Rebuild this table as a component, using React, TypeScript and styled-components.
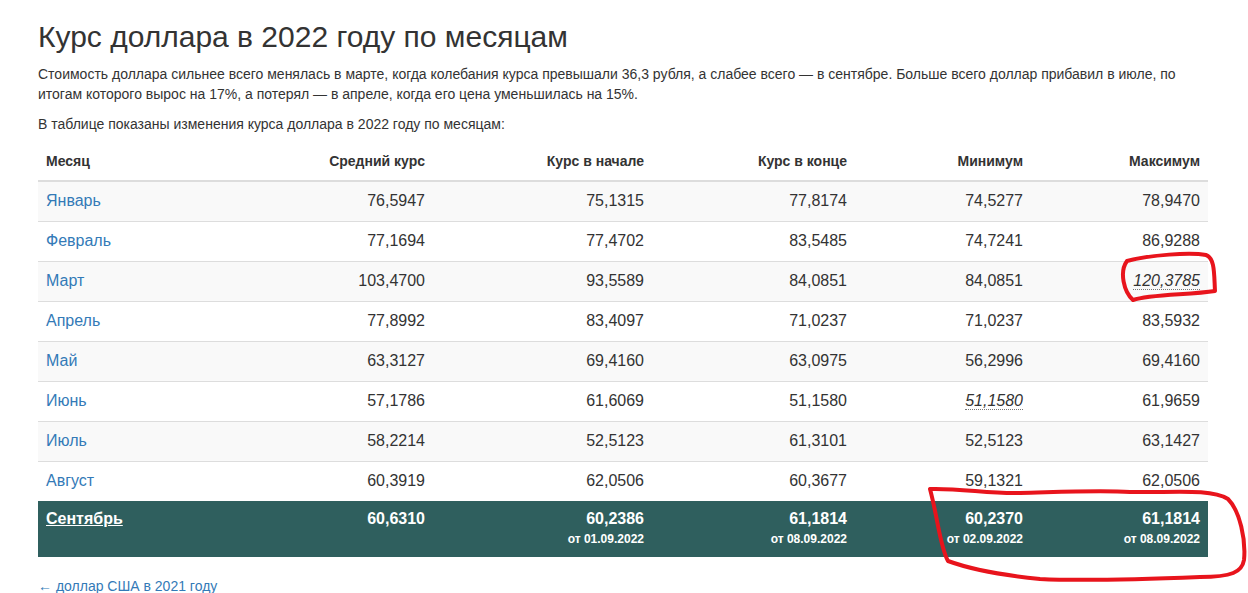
import React from "react";
import styled, { createGlobalStyle } from "styled-components";

const Global = createGlobalStyle`
  html, body { margin: 0; padding: 0; background: #fff; }
  body {
    font-family: "Liberation Sans", Arial, sans-serif;
    font-size: 14px;
    line-height: 1.42857;
    color: #333;
  }
`;

const Page = styled.div`
  position: relative;
  width: 1248px;
  height: 593px;
  overflow: hidden;
  padding: 0 40px 0 38px;
  box-sizing: border-box;
`;

const Title = styled.h1`
  font-size: 30px;
  font-weight: 400;
  line-height: 1.1;
  margin: 20px 0 11px;
  color: #333;
`;

const Para = styled.p`
  margin: 0 0 10px;
  font-size: 14px;
  line-height: 20px;
`;

const Table = styled.table`
  width: 1170px;
  border-collapse: collapse;
  border-spacing: 0;
  margin-top: 8px;
  table-layout: fixed;
  font-size: 16px;
`;

const Th = styled.th<{ $left?: boolean }>`
  text-align: ${(p) => (p.$left ? "left" : "right")};
  font-size: 14px;
  font-weight: 700;
  padding: 7px 8px 9px;
  line-height: 20px;
  border-bottom: 2px solid #ddd;
  color: #333;
`;

const Row = styled.tr<{ $striped?: boolean }>`
  background: ${(p) => (p.$striped ? "#f9f9f9" : "#fff")};
`;

const Td = styled.td<{ $left?: boolean }>`
  text-align: ${(p) => (p.$left ? "left" : "right")};
  padding: 9px 8px 10px;
  line-height: 20px;
  border-top: 1px solid #ddd;
  color: #333;
`;

const MonthLink = styled.a`
  color: #337ab7;
  text-decoration: none;
`;

const Marked = styled.span`
  font-style: italic;
  border-bottom: 1px dotted #777;
`;

const TotalRow = styled.tr`
  background: #2f5f5e;
  color: #fff;
`;

const TotalTd = styled.td<{ $left?: boolean }>`
  text-align: ${(p) => (p.$left ? "left" : "right")};
  padding: 8px 8px 10px;
  line-height: 20px;
  vertical-align: top;
  font-weight: 700;
  color: #fff;
`;

const TotalLink = styled.a`
  color: #fff;
  text-decoration: underline;
`;

const SubDate = styled.div`
  font-size: 12px;
  line-height: 16px;
  margin-top: 2px;
  font-weight: 700;
`;

const Footer = styled.a`
  display: inline-block;
  margin-top: 20px;
  font-size: 14px;
  color: #337ab7;
  text-decoration: none;
`;

const Scribble = styled.svg`
  position: absolute;
  left: 0;
  top: 0;
  pointer-events: none;
`;

type R = { m: string; v: (string | React.ReactNode)[] };

const rows: R[] = [
  { m: "Январь", v: ["76,5947", "75,1315", "77,8174", "74,5277", "78,9470"] },
  { m: "Февраль", v: ["77,1694", "77,4702", "83,5485", "74,7241", "86,9288"] },
  { m: "Март", v: ["103,4700", "93,5589", "84,0851", "84,0851", <Marked key="m">120,3785</Marked>] },
  { m: "Апрель", v: ["77,8992", "83,4097", "71,0237", "71,0237", "83,5932"] },
  { m: "Май", v: ["63,3127", "69,4160", "63,0975", "56,2996", "69,4160"] },
  { m: "Июнь", v: ["57,1786", "61,6069", "51,1580", <Marked key="j">51,1580</Marked>, "61,9659"] },
  { m: "Июль", v: ["58,2214", "52,5123", "61,3101", "52,5123", "63,1427"] },
  { m: "Август", v: ["60,3919", "62,0506", "60,3677", "59,1321", "62,0506"] },
];

export default function App() {
  return (
    <Page>
      <Global />
      <Title>Курс доллара в 2022 году по месяцам</Title>
      <Para>
        Стоимость доллара сильнее всего менялась в марте, когда колебания курса превышали 36,3 рубля, а слабее всего — в сентябре. Больше всего доллар прибавил в июле, по итогам которого вырос на 17%, а потерял — в апреле, когда его цена уменьшилась на 15%.
      </Para>
      <Para>В таблице показаны изменения курса доллара в 2022 году по месяцам:</Para>
      <Table>
        <colgroup>
          <col style={{ width: 200 }} />
          <col style={{ width: 195 }} />
          <col style={{ width: 219 }} />
          <col style={{ width: 203 }} />
          <col style={{ width: 176 }} />
          <col style={{ width: 177 }} />
        </colgroup>
        <thead>
          <tr>
            <Th $left>Месяц</Th>
            <Th>Средний курс</Th>
            <Th>Курс в начале</Th>
            <Th>Курс в конце</Th>
            <Th>Минимум</Th>
            <Th>Максимум</Th>
          </tr>
        </thead>
        <tbody>
          {rows.map((r, i) => (
            <Row key={r.m} $striped={i % 2 === 0}>
              <Td $left>
                <MonthLink href="#">{r.m}</MonthLink>
              </Td>
              {r.v.map((v, j) => (
                <Td key={j}>{v}</Td>
              ))}
            </Row>
          ))}
          <TotalRow>
            <TotalTd $left>
              <TotalLink href="#">Сентябрь</TotalLink>
            </TotalTd>
            <TotalTd>60,6310</TotalTd>
            <TotalTd>
              60,2386<SubDate>от 01.09.2022</SubDate>
            </TotalTd>
            <TotalTd>
              61,1814<SubDate>от 08.09.2022</SubDate>
            </TotalTd>
            <TotalTd>
              60,2370<SubDate>от 02.09.2022</SubDate>
            </TotalTd>
            <TotalTd>
              61,1814<SubDate>от 08.09.2022</SubDate>
            </TotalTd>
          </TotalRow>
        </tbody>
      </Table>
      <Footer href="#">← доллар США в 2021 году</Footer>
      <Scribble width="1248" height="593" viewBox="0 0 1248 593">
        <path
          d="M1127 261 C1150 255 1190 252 1206 255 C1215 258 1214 274 1215 291 C1190 295 1150 294 1133 300 C1124 292 1119 272 1127 261 Z"
          fill="none"
          stroke="#e8141c"
          strokeWidth="4"
          strokeLinejoin="round"
        />
        <path
          d="M930 489 C960 488 990 494 1020 493 C1060 492 1100 490 1130 492 C1170 493 1210 488 1228 499 C1240 511 1246 540 1244 560 C1242 572 1232 577 1200 577 C1150 579 1080 581 1040 579 C1000 575 970 569 948 561 C940 547 938 519 930 489 Z"
          fill="none"
          stroke="#e8141c"
          strokeWidth="4"
          strokeLinejoin="round"
        />
      </Scribble>
    </Page>
  );
}
